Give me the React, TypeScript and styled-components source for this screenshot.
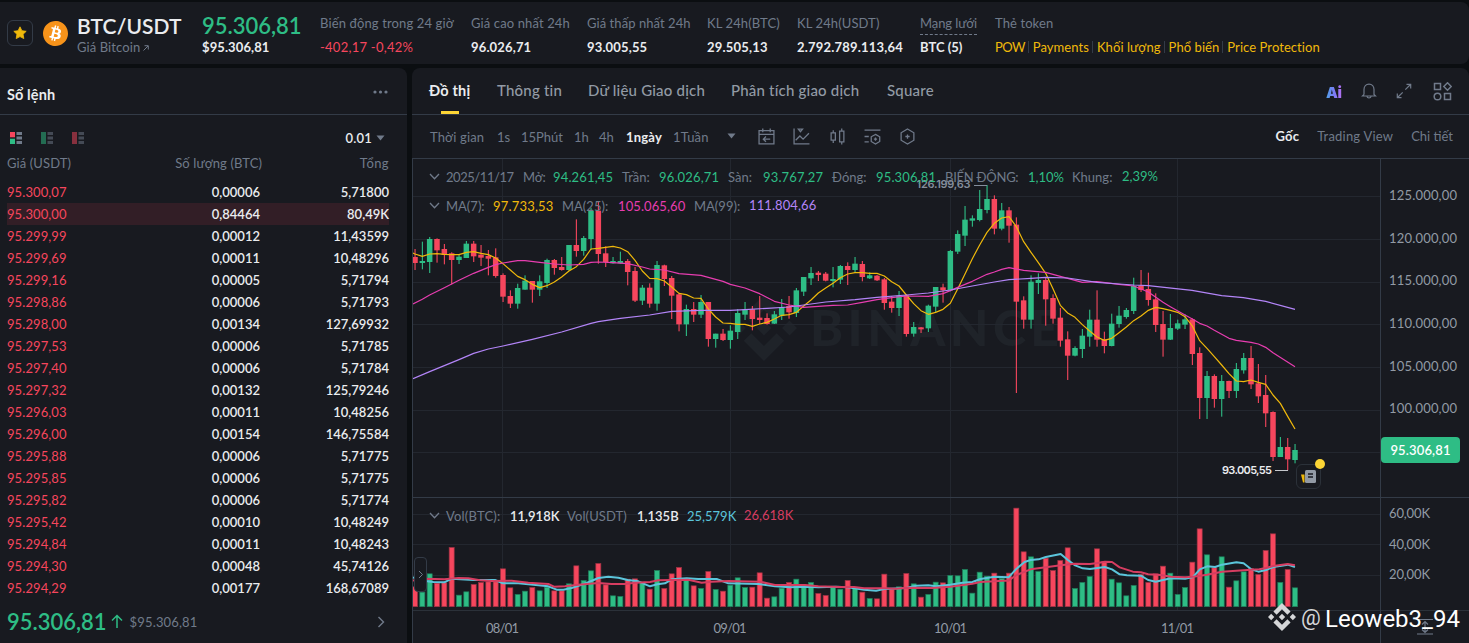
import React from "react";
import styled, { createGlobalStyle } from "styled-components";
import { SiBitcoin } from "react-icons/si";

const c = {
  page: "#0b0e11",
  panel: "#181a20",
  line: "#333b47",
  grid: "#23272f",
  text: "#eaecef",
  sub: "#707a8a",
  tab: "#929aa5",
  green: "#2ebd85",
  red: "#f6465d",
  yellow: "#f0b90b",
  pink: "#e73db0",
  purple: "#b385f8",
  cyan: "#5bc5db",
  volRed: "#d63d61",
};

const Global = createGlobalStyle`
  * { box-sizing: border-box; }
  html, body { margin: 0; background: ${c.page}; overflow: hidden; }
  body { font-family: Lato, "Noto Sans", sans-serif; color: ${c.text}; font-size: 14px; }
  svg { display: block; }
`;

const Page = styled.div`
  width: 1469px;
  height: 643px;
  padding-top: 2px;
  display: flex;
  flex-direction: column;
  gap: 4px;
  overflow: hidden;
`;

/* ---------- text ---------- */
const Txt = styled.span<{ $c?: string; $s?: number; $w?: number; $ls?: number }>`
  color: ${(p) => p.$c ?? c.text};
  font-size: ${(p) => p.$s ?? 13}px;
  font-weight: ${(p) => p.$w ?? 400};
  letter-spacing: ${(p) => p.$ls ?? 0}px;
  white-space: nowrap;
`;

/* ---------- header ---------- */
const Header = styled.header`
  height: 62px;
  flex: none;
  background: ${c.panel};
  border-radius: 0 8px 8px 0;
  display: flex;
  align-items: center;
  padding-left: 7px;
`;
const StarBox = styled.div`
  width: 26px;
  height: 26px;
  border: 1px solid ${c.line};
  border-radius: 6px;
  display: grid;
  place-items: center;
`;
const Coin = styled.div`
  width: 25px;
  height: 25px;
  margin-left: 10px;
  border-radius: 50%;
  background: radial-gradient(#fff 60%, transparent 61%);
  color: #f7931a;
`;
const Stack = styled.div<{ $w: number }>`
  width: ${(p) => p.$w}px;
  padding-top: 4px;
  display: flex;
  flex-direction: column;
  & > * { line-height: 24px; height: 24px; }
`;
const Big = styled(Stack)`
  & > :first-child { line-height: 26px; height: 23px; }
  & > :last-child { line-height: 22px; height: 21px; }
`;
const PairName = styled(Big)`
  margin-left: 9px;
  margin-right: 1px;
`;
const NetLabel = styled(Txt)`
  display: inline-block;
  width: 57px;
  border-bottom: 1px dashed ${c.sub};
`;
const Tags = styled.div`
  display: flex;
  align-items: center;
`;
const Tag = styled(Txt)`
  & + & { border-left: 1px solid ${c.line}; line-height: 12px; padding-left: 4px; margin-left: 3px; }
  &:first-child { letter-spacing: -0.6px; }
`;

/* ---------- body ---------- */
const Body = styled.div`
  flex: 1;
  display: flex;
  gap: 5px;
  min-height: 0;
`;
const Book = styled.section`
  width: 407px;
  background: ${c.panel};
  border-radius: 0 8px 0 0;
  display: flex;
  flex-direction: column;
`;
const BookHead = styled.div`
  height: 47px;
  border-bottom: 1px solid ${c.line};
  display: flex;
  align-items: center;
  justify-content: space-between;
  padding: 6px 19px 0 7px;
  & svg { margin-top: -4px; }
`;
const BookTools = styled.div`
  height: 46px;
  display: flex;
  align-items: center;
  padding: 0 22px 0 9px;
  gap: 17px;
`;
const Step = styled.div`
  margin-left: auto;
  display: flex;
  align-items: center;
  gap: 4px;
`;
const Cols = styled.div<{ $hot?: boolean }>`
  height: 22px;
  line-height: 22px;
  margin: 0 18px 0 7px;
  display: grid;
  grid-template-columns: 124px 129px 1fr;
  background: ${(p) => (p.$hot ? "#321e26" : "transparent")};
  & > :nth-child(n + 2) { text-align: right; }
`;
const ColHead = styled(Cols)`
  height: 20px;
  line-height: 5px;
  & > :nth-child(2) { margin-right: -2px; }
`;
const BookFoot = styled.div`
  flex: 1;
  display: flex;
  align-items: center;
  padding: 1px 22px 0 7px;
  & > :last-child { margin-left: auto; }
`;
const Rise = styled.svg`
  margin: 0 7px 0 4px;
`;

const Main = styled.section`
  width: 1057px;
  background: ${c.panel};
  border-radius: 8px 8px 0 0;
  display: flex;
  flex-direction: column;
`;
const Tabs = styled.nav`
  height: 47px;
  border-bottom: 1px solid ${c.line};
  display: flex;
  padding-left: 17px;
  padding-right: 17px;
  align-items: center;
`;
const Tab = styled.div<{ $on?: boolean; $w: number }>`
  width: ${(p) => p.$w}px;
  height: 46px;
  line-height: 45px;
  font-size: ${(p) => (p.$on ? 14.5 : 15)}px;
  font-weight: ${(p) => (p.$on ? 700 : 500)};
  letter-spacing: 0.2px;
  color: ${(p) => (p.$on ? c.text : c.tab)};
  white-space: nowrap;
  background: ${(p) =>
    p.$on ? "linear-gradient(#fcd535,#fcd535) 12px 100% / 18px 3px no-repeat" : "none"};
`;
const Icons = styled.div`
  margin-left: auto;
  display: flex;
  align-items: center;
  gap: 19px;
  & > :first-child { margin-right: -2px; }
  & > :last-child { margin-left: 2px; }
`;
const Tools = styled.div`
  height: 44px;
  border-bottom: 1px solid ${c.line};
  display: flex;
  align-items: center;
  padding: 0 16px 1px 18px;
`;
const Slot = styled.div<{ $w: number }>`
  width: ${(p) => p.$w}px;
  white-space: nowrap;
  flex: none;
`;
const Views = styled.div`
  margin-left: auto;
  display: flex;
  gap: 18px;
`;
const ChartBox = styled.div`
  position: relative;
  height: 484px;
  border-left: 1px solid ${c.line};
`;
const Legend = styled.div<{ $y: number }>`
  position: absolute;
  left: 16px;
  top: ${(p) => p.$y}px;
  height: 18px;
  display: flex;
  align-items: center;
`;
const LegendArrow = styled.svg`
  margin-right: 6px;
`;
const Toggle = styled.div`
  position: absolute;
  left: 1px;
  top: 398px;
  width: 13px;
  height: 35px;
  border: 1px solid ${c.line};
  border-radius: 4px;
  background: ${c.panel};
  display: grid;
  place-items: center;
`;
const PriceTag = styled.div`
  position: absolute;
  left: 968px;
  top: 278px;
  width: 79px;
  height: 26px;
  border-radius: 4px;
  background: ${c.green};
  display: grid;
  place-items: center;
`;
const News = styled.div`
  position: absolute;
  left: 883px;
  top: 305px;
  width: 25px;
  height: 25px;
  border: 1px solid #2b3139;
  border-radius: 6px;
  background: ${c.panel};
  display: grid;
  place-items: center;
  &::after {
    content: "";
    position: absolute;
    right: -5px;
    top: -6px;
    width: 10px;
    height: 10px;
    border-radius: 50%;
    background: #fcd535;
  }
`;
const Signature = styled.div`
  position: absolute;
  left: 855px;
  top: 443px;
  display: flex;
  align-items: center;
  height: 30px;
  font-family: Roboto, sans-serif;
  color: #fff;
  white-space: nowrap;
`;
const At = styled.span`
  width: 24px;
  margin-left: 5px;
  font-size: 22px;
  color: #d5d6d8;
`;
const Handle = styled.span`
  font-size: 24px;
  margin-top: 3px;
`;

/* ---------- data ---------- */
const asks: [string, string, string][] = [
  ["95.300,07", "0,00006", "5,71800"],
  ["95.300,00", "0,84464", "80,49K"],
  ["95.299,99", "0,00012", "11,43599"],
  ["95.299,69", "0,00011", "10,48296"],
  ["95.299,16", "0,00005", "5,71794"],
  ["95.298,86", "0,00006", "5,71793"],
  ["95.298,00", "0,00134", "127,69932"],
  ["95.297,53", "0,00006", "5,71785"],
  ["95.297,40", "0,00006", "5,71784"],
  ["95.297,32", "0,00132", "125,79246"],
  ["95.296,03", "0,00011", "10,48256"],
  ["95.296,00", "0,00154", "146,75584"],
  ["95.295,88", "0,00006", "5,71775"],
  ["95.295,85", "0,00006", "5,71775"],
  ["95.295,82", "0,00006", "5,71774"],
  ["95.295,42", "0,00010", "10,48249"],
  ["95.294,84", "0,00011", "10,48243"],
  ["95.294,30", "0,00048", "45,74126"],
  ["95.294,29", "0,00177", "168,67089"],
];

/* One candle per day: direction, high, body top, body bottom, low (thirds of a pixel below 170). */
const candles = `r 237 261 279 300|g 215 273 279 298|g 201 207 276 309|r 205 207 241 278|r 222 237 255 283|r 247 250 270 343|g 254 260 270 282|g 213 221 264 264|r 213 221 259 276|r 225 254 263 288|r 240 258 266 316|r 235 262 318 323|r 310 315 380 396|r 361 378 401 414|g 341 354 401 416|g 316 332 359 359|r 333 333 359 398|g 316 334 359 378|g 266 270 339 354|r 267 270 294 314|r 261 291 300 302|g 225 225 300 303|r 148 225 243 260|g 198 204 243 257|g 113 122 207 240|r 95 122 252 281|r 229 250 276 291|g 261 273 280 281|g 245 273 280 281|r 267 273 306 346|r 291 303 392 396|g 345 353 392 405|r 340 353 401 413|g 273 285 401 422|r 284 286 327 348|r 318 324 377 447|r 370 373 463 484|g 404 417 463 498|r 396 417 434 456|g 375 396 434 444|r 396 396 507 530|g 491 491 507 533|r 477 491 510 513|g 466 482 510 536|g 417 429 486 507|g 396 418 434 450|r 408 418 447 481|r 378 443 450 462|r 430 444 462 464|g 423 433 461 462|g 387 411 437 450|r 378 408 427 446|g 354 361 429 441|g 321 321 365 378|g 291 309 325 345|r 303 308 315 333|r 306 311 332 334|g 291 327 333 352|g 285 288 329 342|r 277 288 300 345|g 261 281 300 307|r 273 282 321 334|g 307 316 325 327|r 315 317 331 333|r 324 328 399 419|r 378 395 414 428|g 363 377 414 438|r 373 376 492 500|g 456 471 491 500|r 471 472 478 489|g 404 407 475 486|g 351 351 410 426|r 341 352 361 398|g 240 243 361 364|g 181 192 245 252|g 108 149 197 228|g 136 145 152 170|g 60 117 150 154|g 45 87 120 130|r 76 87 176 193|g 99 121 176 181|r 111 121 167 218|r 142 164 395 669|r 379 391 449 476|g 316 335 449 476|g 310 330 339 372|r 321 330 388 467|r 373 384 446 461|r 414 443 512 530|r 484 508 557 630|g 529 534 557 559|g 477 497 537 564|g 419 449 500 530|r 361 449 509 530|r 485 508 528 550|g 431 461 528 529|g 408 437 462 473|g 414 420 441 446|g 323 348 423 432|r 300 347 360 366|r 308 357 390 407|r 370 388 465 486|r 423 462 509 560|g 432 474 509 510|g 449 460 476 480|g 433 448 464 477|r 445 448 552 585|r 532 549 684 747|g 603 618 684 747|r 613 618 687 713|g 615 633 687 740|r 632 633 663 684|g 579 597 663 684|g 549 564 601 611|r 528 564 643 657|r 582 640 679 699|r 615 675 730 771|r 724 726 861 873|g 801 831 861 861|r 804 831 868 901|g 822 840 870 880`
  .split("|")
  .map((s) => {
    const [d, ...v] = s.split(" ");
    return { up: d === "g", v: v.map(Number) };
  });

/* Top of each volume bar, thirds of a pixel below 490; the base is at 350. */
const volumes = [
  289, 305, 250, 278, 277, 171, 314, 304, 282, 276, 274, 274, 235, 292, 312, 302, 291, 301, 290, 301, 301, 280, 226,
  270, 241, 219, 283, 316, 318, 266, 265, 275, 296, 240, 294, 250, 231, 264, 286, 294, 243, 297, 302, 284, 262, 291,
  290, 247, 323, 319, 293, 276, 266, 288, 276, 309, 315, 290, 296, 270, 294, 305, 324, 325, 251, 296, 289, 249, 280,
  320, 312, 275, 277, 255, 256, 237, 308, 245, 257, 248, 264, 248, 53, 184, 199, 243, 203, 240, 210, 172, 294, 276,
  258, 175, 213, 266, 277, 316, 285, 252, 276, 250, 227, 248, 312, 291, 215, 115, 193, 232, 199, 290, 271, 244, 234,
  252, 180, 130, 276, 237, 292,
];

const ma7 = [
  252, 259, 252, 251, 253, 254, 254, 247, 245, 250, 254, 264, 281, 300, 319, 329, 343, 353, 347, 336, 321, 303, 290,
  268, 237, 235, 232, 229, 234, 245, 271, 303, 325, 326, 333, 351, 370, 374, 384, 385, 417, 441, 459, 460, 463, 463,
  469, 462, 457, 447, 436, 434, 427, 408, 390, 369, 354, 340, 323, 312, 308, 308, 310, 310, 318, 335, 348, 375, 401,
  422, 433, 427, 418, 400, 357, 312, 266, 225, 187, 160, 144, 140, 170, 215, 247, 278, 310, 356, 406, 429, 442, 464,
  483, 501, 511, 505, 488, 471, 452, 438, 421, 412, 416, 421, 427, 440, 468, 512, 535, 560, 585, 611, 633, 635, 630,
  637, 643, 675, 700, 739, 777,
];

/* Points as "x,y" in thirds of a pixel, measured from (410,170). */
const ma25 =
  "9,402 37,388 59,375 103,353 147,331 191,310 235,292 257,284 279,279 323,272 345,272 389,277 433,282 477,285 521,283 543,277 565,276 609,278 653,281 697,291 719,297 763,300 807,311 873,316 895,322 939,334 961,343 1005,354 1049,371 1093,394 1137,405 1181,412 1225,409 1269,406 1313,405 1357,397 1401,389 1445,383 1489,378 1555,379 1599,371 1621,362 1643,352 1687,334 1731,313 1753,306 1775,298 1797,293 1841,301 1907,307 1951,319 2017,337 2061,335 2127,343 2171,348 2215,366 2259,397 2281,410 2325,435 2347,447 2369,460 2391,468 2413,481 2457,505 2479,511 2523,517 2545,522 2567,532 2589,548 2655,590";
const ma99 =
  "9,626 59,605 103,587 147,569 191,550 235,537 279,528 367,508 455,486 543,460 565,455 631,445 719,435 785,424 873,421 961,421 1005,419 1071,415 1137,411 1181,405 1247,396 1335,389 1401,382 1489,375 1555,369 1621,360 1687,348 1753,336 1797,329 1863,325 1907,322 1973,324 2061,337 2127,342 2171,345 2215,347 2270,353 2346,361 2435,377 2500,383 2567,394 2655,418";

/* Volume averages: [day, y] pairs, y in thirds of a pixel below 490. */
const at = (k: number, o: number, s: string) =>
  s.split(" ").map((p) => {
    const [x, y] = p.split(",").map(Number);
    return [(x + o) / k, y];
  });
const volFast = [
  ...at(22, -30, "22,262 55,272 85,276 118,277 140,266 206,270 270,270 294,280 340,280 430,289 455,299 475,299 500,294 545,279 580,264 610,260 640,263 668,270 700,274 735,289 757,283 780,280 800,268 845,265 880,267 935,267 970,280 1060,282 1110,289 1155,292 1200,290 1240,292"),
  ...at(18.28, 1059.5, "-10,290 20,292 60,299 90,302 110,297 165,294 190,287 220,286 240,289 275,284 305,278 330,276 350,267 385,260 420,262 440,236 460,216 475,210 495,208 513,201 550,192 568,210 586,226 605,235 623,237 660,231 678,238 697,253 715,256 750,257 768,270 787,275 805,270 825,265 860,266 880,261 897,238 915,229 935,231 952,224 988,217 1006,220 1025,238 1043,245 1062,240 1080,231 1116,224 1134,231"),
];
const volSlow = [
  ...at(22, -30, "22,272 60,266 118,268 160,264 190,265 225,271 260,273 320,272 370,278 430,282 447,290 480,289 520,284 580,279 620,282 660,282 690,278 735,276 760,271 800,270 850,269 890,278 920,275 970,273 1065,275 1110,285 1200,285 1240,289"),
  ...at(18.28, 1059.5, "0,291 35,291 60,295 110,295 140,296 165,293 230,294 275,290 330,281 350,276 385,274 405,272 420,272 440,255 475,238 513,232 550,226 585,221 623,222 642,219 660,215 678,216 697,232 730,245 750,247 768,253 800,255 825,260 860,262 880,260 915,254 952,245 1006,241 1045,238 1062,234 1080,228 1116,222 1134,226"),
];

const dayX = (i: number) => 415 + (i * 22) / 3;
const px = (base: number, v: number) => base + v / 3;
const shift = (s: string) =>
  s
    .split(" ")
    .map((p) => {
      const [x, y] = p.split(",").map(Number);
      return `${px(410, x)},${px(170, y)}`;
    })
    .join(" ");
const volPoints = (a: number[][]) => a.map(([i, y]) => `${dayX(i)},${px(490, y)}`).join(" ");

const binancePath =
  "M16.624 13.9202l2.7175 2.7154-7.353 7.353-7.353-7.352 2.7175-2.7164 4.6355 4.6595 4.6356-4.6595zm4.6366-4.6366L24 12l-2.7154 2.7164L18.5682 12l2.6924-2.7164zm-9.272.001l2.7163 2.6914-2.7164 2.7174v-.001L9.2721 12l2.7164-2.7154zm-9.2722-.001L5.4088 12l-2.6914 2.6924L0 12l2.7164-2.7164zM11.9885.0115l7.353 7.329-2.7174 2.7154-4.6356-4.6356-4.6355 4.6595-2.7174-2.7154 7.353-7.353z";

const AxisText = styled.text`
  font-size: 13px;
  fill: ${c.tab};
`;

const Chart = () => (
  <svg width="1056" height="484" viewBox="413 159 1056 484">
    <g fill="#1f2329">
      <path d={binancePath} transform="translate(731 295) scale(2.75)" />
      <text x="810" y="346" fontSize="50" fontWeight="900" textLength="249" fontFamily="Lato">
        BINANCE
      </text>
    </g>
    <g stroke={c.grid} shapeRendering="crispEdges">
      {[196.5, 239.5, 282.5, 324.5, 367.5, 410.5, 452.5, 514.5, 544.5, 575.5].map((y) => (
        <line key={y} x1="413" x2="1380" y1={y} y2={y} />
      ))}
      {[502.5, 730.5, 950.5, 1177.5].map((x) => (
        <line key={x} x1={x} x2={x} y1="159" y2="610" />
      ))}
    </g>
    <g stroke={c.line} shapeRendering="crispEdges">
      <line x1="413" x2="1469" y1="497.5" y2="497.5" />
      <line x1="413" x2="1469" y1="610.5" y2="610.5" stroke="#2b3139" />
      <line x1="1380.5" x2="1380.5" y1="159" y2="643" />
    </g>

    {volumes.map((v, i) => (
      <rect
        key={i}
        x={dayX(i) - 2.5}
        y={px(490, v) + 0.5}
        width="5"
        height={(350 - v) / 3 - 0.5}
        fill={candles[i].up ? c.green : c.red}
        stroke={candles[i].up ? "#1f7f5c" : "#9c3244"}
        strokeWidth="0.7"
      />
    ))}
    {candles.map(({ up, v }, i) => (
      <g key={i} fill={up ? c.green : c.red}>
        <rect x={dayX(i) - 0.5} y={px(170, v[0])} width="1.1" height={(v[3] - v[0]) / 3} />
        <rect x={dayX(i) - 2.75} y={px(170, v[1])} width="5.5" height={Math.max(1, (v[2] - v[1]) / 3)} />
      </g>
    ))}
    <g fill="none" strokeWidth="1.2" strokeLinejoin="round">
      <polyline stroke={c.yellow} points={"413,253 " + ma7.map((v, i) => `${dayX(i)},${px(170, v)}`).join(" ")} />
      <polyline stroke={c.pink} points={shift(ma25)} />
      <polyline stroke={c.purple} points={shift(ma99)} />
    </g>
    <g fill="none" strokeWidth="2" strokeLinejoin="round">
      <polyline stroke={c.cyan} points={volPoints(volFast)} />
      <polyline stroke={c.volRed} points={volPoints(volSlow)} />
    </g>

    {["125", "120", "115", "110", "105", "100"].map((n, i) => (
      <AxisText key={n} x="1389" y={200 + i * 42.65} textLength="68">
        {n + ".000,00"}
      </AxisText>
    ))}
    {["60", "40", "20"].map((n, i) => (
      <AxisText key={n} x="1389" y={518 + i * 30.5} textLength="41">
        {n + ",00K"}
      </AxisText>
    ))}
    {[
      ["08/01", 502.5],
      ["09/01", 730],
      ["10/01", 950.5],
      ["11/01", 1177.5],
    ].map(([t, x]) => (
      <AxisText key={t} x={Number(x) - 16.5} y="633" textLength="33">
        {t}
      </AxisText>
    ))}

    <g fontFamily="Inter, sans-serif" fontSize="11" fontWeight="600">
      <text x="916.5" y="188" textLength="54" fill="#848e9c">
        126.199,63
      </text>
      <text x="1222" y="474" textLength="50" fill={c.text}>
        93.005,55
      </text>
    </g>
    <path d="M974 185.5H987" stroke="#848e9c" />
    <path d="M1275 470.5H1288" stroke="#c5c8cc" />
    <path
      d="M1417 619.5H1433M1417 634H1433M1425 622V632M1422 624.5L1425 621.5L1428 624.5M1422 629.5L1425 632.5L1428 629.5"
      stroke={c.sub}
      strokeWidth="1.2"
      fill="none"
    />
  </svg>
);

/* ---------- icons ---------- */
const Chevron = () => (
  <LegendArrow width="11" height="7" viewBox="0 0 11 7" fill="none" stroke={c.sub} strokeWidth="1.3">
    <path d="M1 1L5.5 5.7L10 1" />
  </LegendArrow>
);
const Caret = () => (
  <svg width="9" height="6" viewBox="0 0 9 6" fill={c.sub}>
    <path d="M0.5 0.5H8.5L4.5 5.5z" />
  </svg>
);
const BookIcon = ({ top, bottom, dim }: { top: string; bottom: string; dim?: boolean }) => (
  <svg width="14" height="14" viewBox="0 0 14 14" opacity={dim ? 0.5 : 1}>
    <path d={top === bottom ? "M1 1H6V13H1z" : "M1 1H6V6.3H1z"} fill={top} />
    {top !== bottom && <path d="M1 7.7H6V13H1z" fill={bottom} />}
    <path d="M7.5 1H13V4H7.5zM7.5 5.5H13V8.5H7.5zM7.5 10H13V13H7.5z" fill={c.sub} />
  </svg>
);
const Glyph = ({ d, size = 16, w = 1.2 }: { d: string; size?: number; w?: number }) => (
  <svg width={size} height={size} viewBox="0 0 16 16" fill="none" stroke={c.sub} strokeWidth={w}>
    <path d={d} />
  </svg>
);
const OutLink = styled.svg`
  && { display: inline; vertical-align: 1px; margin-left: -1px; }
`;
const AiMark = styled.span`
  font: 900 15px/17px Inter, sans-serif;
  letter-spacing: -0.3px;
  width: 18px;
  padding-top: 3px;
  background: linear-gradient(90deg, #4fa3e8, #7a7bf5 45%, #c56cf0);
  background-clip: text;
  -webkit-background-clip: text;
  color: transparent;
`;

export default function App() {
  return (
    <>
      <Global />
      <Page>
        <Header>
          <StarBox>
            <svg width="14" height="14" viewBox="0 0 14 14" fill={c.yellow}>
              <path
                d="M7 .8l1.9 3.9 4.3.6-3.1 3 .7 4.3L7 10.6l-3.8 2 .7-4.3-3.1-3 4.3-.6z"
                stroke={c.yellow}
                strokeLinejoin="round"
                strokeWidth=".8"
              />
            </svg>
          </StarBox>
          <Coin>
            <SiBitcoin size={25} />
          </Coin>
          <PairName $w={124}>
            <Txt $s={21} $w={600} $ls={0.1}>BTC/USDT</Txt>
            <Txt $c={c.sub} $ls={0.1}>
              Giá Bitcoin{" "}
              <OutLink width="6" height="6" viewBox="0 0 6 6" fill="none" stroke={c.sub}>
                <path d="M0.5 5.5L5 1M1.5 .7H5.3V4.5" />
              </OutLink>
            </Txt>
          </PairName>
          <Big $w={118}>
            <Txt $s={22} $w={600} $c={c.green}>95.306,81</Txt>
            <Txt $w={700} $ls={0.1}>$95.306,81</Txt>
          </Big>
          <Stack $w={151}>
            <Txt $c={c.sub} $ls={0.13}>Biến động trong 24 giờ</Txt>
            <Txt $c={c.red} $ls={0.25}>-402,17 -0,42%</Txt>
          </Stack>
          <Stack $w={116}>
            <Txt $c={c.sub} $ls={0.12}>Giá cao nhất 24h</Txt>
            <Txt $w={700} $ls={0.15}>96.026,71</Txt>
          </Stack>
          <Stack $w={120}>
            <Txt $c={c.sub} $ls={0.06}>Giá thấp nhất 24h</Txt>
            <Txt $w={700} $ls={0.15}>93.005,55</Txt>
          </Stack>
          <Stack $w={90}>
            <Txt $c={c.sub} $ls={0.1}>KL 24h(BTC)</Txt>
            <Txt $w={700} $ls={0.2}>29.505,13</Txt>
          </Stack>
          <Stack $w={123}>
            <Txt $c={c.sub} $ls={0.1}>KL 24h(USDT)</Txt>
            <Txt $w={700} $ls={0.2}>2.792.789.113,64</Txt>
          </Stack>
          <Stack $w={75}>
            <NetLabel $c={c.sub} $ls={-0.1}>Mạng lưới</NetLabel>
            <Txt $w={700}>BTC (5)</Txt>
          </Stack>
          <Stack $w={340}>
            <Txt $c={c.sub} $ls={0.1}>Thẻ token</Txt>
            <Tags>
              {["POW", "Payments", "Khối lượng", "Phổ biến", "Price Protection"].map((t) => (
                <Tag key={t} $c={c.yellow} $ls={0.07}>{t}</Tag>
              ))}
            </Tags>
          </Stack>
        </Header>

        <Body>
          <Book>
            <BookHead>
              <Txt $s={14.5} $w={700} $ls={0.1}>Sổ lệnh</Txt>
              <svg width="15" height="4" viewBox="0 0 15 4" fill={c.sub}>
                <circle cx="2" cy="2" r="1.6" />
                <circle cx="7.5" cy="2" r="1.6" />
                <circle cx="13" cy="2" r="1.6" />
              </svg>
            </BookHead>
            <BookTools>
              <BookIcon top={c.red} bottom={c.green} />
              <BookIcon top={c.green} bottom={c.green} dim />
              <BookIcon top={c.red} bottom={c.red} dim />
              <Step>
                <Txt $w={600} $ls={0.2}>0.01</Txt>
                <Caret />
              </Step>
            </BookTools>
            <ColHead>
              <Txt $c={c.sub} $ls={0.1}>Giá (USDT)</Txt>
              <Txt $c={c.sub} $ls={0.1}>Số lượng (BTC)</Txt>
              <Txt $c={c.sub} $ls={0.4}>Tổng</Txt>
            </ColHead>
            {asks.map(([p, a, t], i) => (
              <Cols key={p} $hot={i === 1}>
                <Txt $c={c.red} $ls={0.08}>{p}</Txt>
                <Txt $w={600}>{a}</Txt>
                <Txt $w={600}>{t}</Txt>
              </Cols>
            ))}
            <BookFoot>
              <Txt $s={22} $w={600} $c={c.green}>95.306,81</Txt>
              <Rise width="12" height="15" viewBox="0 0 12 15" fill="none" stroke={c.green} strokeWidth="1.5">
                <path d="M6 14V2M1 6.5L6 1.5L11 6.5" />
              </Rise>
              <Txt $c={c.sub} $ls={0.15}>$95.306,81</Txt>
              <svg width="8" height="12" viewBox="0 0 8 12" fill="none" stroke={c.sub} strokeWidth="1.4">
                <path d="M1.5 1L6.5 6L1.5 11" />
              </svg>
            </BookFoot>
          </Book>

          <Main>
            <Tabs>
              <Tab $w={68} $on>Đồ thị</Tab>
              <Tab $w={91}>Thông tin</Tab>
              <Tab $w={143}>Dữ liệu Giao dịch</Tab>
              <Tab $w={156}>Phân tích giao dịch</Tab>
              <Tab $w={60}>Square</Tab>
              <Icons>
                <AiMark>Ai</AiMark>
                <Glyph d="M3 11.5V6.5C3 3.5 5 1.2 8 1.2S13 3.5 13 6.5V11.5L14.5 13H1.5L3 11.5M6 13.5C6.3 15.4 9.7 15.4 10 13.5" />
                <Glyph d="M9.3 6.7L14.5 1.5M10.5 1.3H14.7V5.5M6.7 9.3L1.5 14.5M1.3 10.5V14.7H5.5" />
                <svg width="19" height="19" viewBox="0 0 19 19" fill="none" stroke={c.sub} strokeWidth="1.5">
                  <path d="M1.5 1.5H7.5V7.5H1.5zM11.5 11.5H17.5V17.5H11.5zM14.5 .8L18.2 4.5L14.5 8.2L10.8 4.5z" />
                  <circle cx="4.5" cy="14.5" r="3.3" />
                </svg>
              </Icons>
            </Tabs>
            <Tools>
              <Slot $w={67}><Txt $c={c.sub} $ls={0.15}>Thời gian</Txt></Slot>
              <Slot $w={24}><Txt $c={c.sub}>1s</Txt></Slot>
              <Slot $w={53}><Txt $c={c.sub}>15Phút</Txt></Slot>
              <Slot $w={25}><Txt $c={c.sub}>1h</Txt></Slot>
              <Slot $w={27}><Txt $c={c.sub}>4h</Txt></Slot>
              <Slot $w={47}><Txt $w={700} $ls={0.2}>1ngày</Txt></Slot>
              <Slot $w={54}><Txt $c={c.sub} $ls={0.15}>1Tuần</Txt></Slot>
              <Slot $w={31}><Caret /></Slot>
              <Slot $w={35}><Glyph size={17} d="M1 2.5H15V15H1zM1 6H15M4.5 .5V4M11.5 .5V4M11.5 10.5H5M7.5 8L5 10.5L7.5 13" /></Slot>
              <Slot $w={36}><Glyph size={17} d="M1 .5V15H15.5M2.5 11.5L6.5 7.5L9.5 10.5L15 5M5 1H9L7 3.5z" /></Slot>
              <Slot $w={35}><Glyph size={17} d="M2 4.5H6V11.5H2zM4 2V4.5M4 11.5V14M10 3H14V13H10zM12 .5V3M12 13V15.5" /></Slot>
              <Slot $w={35}><Glyph size={17} d="M.5 2H15.5M.5 8H4.5M.5 13H4.5M10.8 6L14.8 8.3V12.7L10.8 15L6.8 12.7V8.3zM10.8 9V12M9.3 10.5H12.3" /></Slot>
              <Slot $w={17}><Glyph size={17} d="M8 1L14 4.5V11.5L8 15L2 11.5V4.5zM8 6V10M6 8H10" /></Slot>
              <Views>
                <Txt $w={700} $ls={0.2}>Gốc</Txt>
                <Txt $c={c.sub} $ls={0.2}>Trading View</Txt>
                <Txt $c={c.sub}>Chi tiết</Txt>
              </Views>
            </Tools>
            <ChartBox>
              <Chart />
              <Legend $y={8}>
                <Chevron />
                <Slot $w={77}><Txt $c={c.sub} $ls={-0.45}>2025/11/17</Txt></Slot>
                <Slot $w={30}><Txt $c={c.sub} $ls={-0.2}>Mở:</Txt></Slot>
                <Slot $w={69}><Txt $c={c.green} $ls={0.15}>94.261,45</Txt></Slot>
                <Slot $w={37}><Txt $c={c.sub}>Trần:</Txt></Slot>
                <Slot $w={69}><Txt $c={c.green} $ls={0.15}>96.026,71</Txt></Slot>
                <Slot $w={35}><Txt $c={c.sub}>Sàn:</Txt></Slot>
                <Slot $w={69}><Txt $c={c.green} $ls={0.15}>93.767,27</Txt></Slot>
                <Slot $w={44}><Txt $c={c.sub}>Đóng:</Txt></Slot>
                <Slot $w={69}><Txt $c={c.green} $ls={0.15}>95.306,81</Txt></Slot>
                <Slot $w={83}><Txt $c={c.sub} $ls={-0.25}>BIẾN ĐỘNG:</Txt></Slot>
                <Slot $w={44}><Txt $c={c.green}>1,10%</Txt></Slot>
                <Slot $w={50}><Txt $c={c.sub}>Khung:</Txt></Slot>
                <Txt $c={c.green}>2,39%</Txt>
              </Legend>
              <Legend $y={37}>
                <Chevron />
                <Slot $w={47}><Txt $c={c.sub}>MA(7):</Txt></Slot>
                <Slot $w={69}><Txt $c={c.yellow} $ls={0.2}>97.733,53</Txt></Slot>
                <Slot $w={56}><Txt $c={c.sub}>MA(25):</Txt></Slot>
                <Slot $w={76}><Txt $c={c.pink} $ls={0.1}>105.065,60</Txt></Slot>
                <Slot $w={55}><Txt $c={c.sub}>MA(99):</Txt></Slot>
                <Txt $c={c.purple} $ls={0.1}>111.804,66</Txt>
              </Legend>
              <Legend $y={347}>
                <Chevron />
                <Slot $w={64}><Txt $c={c.sub} $ls={0.2}>Vol(BTC):</Txt></Slot>
                <Slot $w={57}><Txt $w={600}>11,918K</Txt></Slot>
                <Slot $w={70}><Txt $c={c.sub} $ls={0.1}>Vol(USDT)</Txt></Slot>
                <Slot $w={50}><Txt $w={600}>1,135B</Txt></Slot>
                <Slot $w={57}><Txt $c={c.cyan}>25,579K</Txt></Slot>
                <Txt $c={c.volRed}>26,618K</Txt>
              </Legend>
              <Toggle>
                <svg width="6" height="9" viewBox="0 0 6 9" fill="none" stroke={c.sub}>
                  <path d="M1 1L4.5 4.5L1 8" />
                </svg>
              </Toggle>
              <PriceTag><Txt $c="#fff" $w={600} $ls={0.15}>95.306,81</Txt></PriceTag>
              <News>
                <svg width="15" height="13" viewBox="0 0 15 13">
                  <path d="M0 4.5H3.5V12.5H2z" fill={c.yellow} />
                  <rect x="4" width="11" height="13" rx="1.5" fill="#929aa5" />
                  <path d="M7 4H12M7 7H12" stroke={c.panel} strokeWidth="1.6" />
                </svg>
              </News>
              <Signature>
                <svg width="28" height="28" viewBox="0 0 24 24" fill="#d5d6d8">
                  <path d={binancePath} />
                </svg>
                <At>@</At>
                <Handle>Leoweb3_94</Handle>
              </Signature>
            </ChartBox>
          </Main>
        </Body>
      </Page>
    </>
  );
}
